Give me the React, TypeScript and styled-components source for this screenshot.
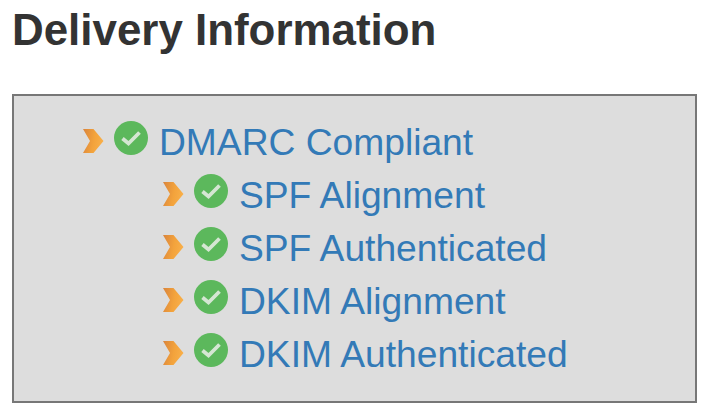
import React from "react";
import styled, { createGlobalStyle } from "styled-components";

const Global = createGlobalStyle`
  html, body { margin: 0; padding: 0; background: #fff; }
`;

const Page = styled.div`
  width: 711px;
  height: 414px;
  overflow: hidden;
  padding: 5px 0 0 12px;
  box-sizing: border-box;
  font-family: "Liberation Sans", Arial, sans-serif;
`;

const Title = styled.h2`
  margin: 0 0 40px;
  font-size: 43.9px;
  line-height: 49px;
  font-weight: 700;
  color: #333;
`;

const Panel = styled.div`
  width: 685px;
  height: 309px;
  box-sizing: border-box;
  border: 2px solid #777;
  background: #ddd;
  padding: 20px 0 0 69px;
`;

const Row = styled.div<{ $child?: boolean }>`
  display: flex;
  align-items: flex-start;
  height: 53px;
  padding-left: ${(p) => (p.$child ? 80 : 0)}px;
`;

const Chevron = styled.svg`
  width: 21px;
  height: 26px;
  margin-top: 12px;
  flex: none;
`;

const Check = styled.svg`
  width: 34px;
  height: 34px;
  margin: 5px 0 0 10px;
  flex: none;
`;

const Label = styled.a`
  margin-left: 11px;
  font-size: 37.2px;
  line-height: 40px;
  padding-top: 6px;
  color: #337ab7;
  white-space: nowrap;
`;

const items = [
  { label: "DMARC Compliant", child: false },
  { label: "SPF Alignment", child: true },
  { label: "SPF Authenticated", child: true },
  { label: "DKIM Alignment", child: true },
  { label: "DKIM Authenticated", child: true },
];

const ChevronIcon = ({ id }: { id: string }) => (
  <Chevron viewBox="0 0 21 26">
    <defs>
      <linearGradient id={id} x1="0" y1="0" x2="1" y2="0.2">
        <stop offset="0" stopColor="#d9843c" />
        <stop offset="0.6" stopColor="#f3a33c" />
        <stop offset="1" stopColor="#f8ae48" />
      </linearGradient>
    </defs>
    <path d="M0 1 H10.5 L20.5 13 L10.5 25 H0 L7 13 Z" fill={`url(#${id})`} />
  </Chevron>
);

const CheckIcon = () => (
  <Check viewBox="0 0 34 34">
    <circle cx="17" cy="17" r="17" fill="#5cb85c" />
    <path d="M8.5 17.5 L14.5 22.5 L25.5 11.5" fill="none" stroke="#d5e6d3" strokeWidth="3.8" />
  </Check>
);

export default function App() {
  return (
    <Page>
      <Global />
      <Title>Delivery Information</Title>
      <Panel>
        {items.map((it, i) => (
          <Row key={it.label} $child={it.child}>
            <ChevronIcon id={`chev${i}`} />
            <CheckIcon />
            <Label>{it.label}</Label>
          </Row>
        ))}
      </Panel>
    </Page>
  );
}
